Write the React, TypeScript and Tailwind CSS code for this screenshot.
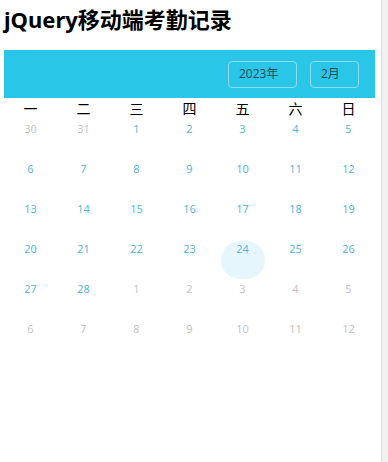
import React from "react";

const weeks = ["一", "二", "三", "四", "五", "六", "日"];

type Cell = { d: number; cur: boolean };

const cells: Cell[] = [
  { d: 30, cur: false },
  { d: 31, cur: false },
  ...Array.from({ length: 28 }, (_, i) => ({ d: i + 1, cur: true })),
  ...Array.from({ length: 12 }, (_, i) => ({ d: i + 1, cur: false })),
];

export default function App() {
  return (
    <div className="flex w-[388px] h-[462px] bg-white overflow-hidden" style={{ fontFamily: '"Open Sans", "Noto Sans CJK SC", sans-serif' }}>
      <div className="flex-1 pl-[4px] pr-[6px]">
        <h1 className="text-[22px] font-bold leading-[30px] mt-[4px] mb-[16px] text-black" style={{ fontFamily: '"Noto Sans", "Noto Sans CJK SC", sans-serif' }}>
          jQuery移动端考勤记录
        </h1>
        <div className="h-[48px] bg-[#29c6e8] flex items-center justify-end pr-[16px] gap-[13px]">
          <div className="w-[69px] h-[27px] border border-[#8fdcf0] rounded-[4px] text-[12px] text-[#2a4a55] flex items-center pl-[10px]">
            2023年
          </div>
          <div className="w-[49px] h-[27px] border border-[#8fdcf0] rounded-[4px] text-[12px] text-[#2a4a55] flex items-center pl-[10px]">
            2月
          </div>
        </div>
        <div className="grid grid-cols-7 h-[20px] items-center">
          {weeks.map((w) => (
            <div key={w} className="text-center text-[14px] leading-[20px] text-black" style={{ fontFamily: '"Noto Sans CJK SC", sans-serif' }}>
              {w}
            </div>
          ))}
        </div>
        <div className="grid grid-cols-7">
          {cells.map((c, i) => (
            <div key={i} className="relative h-[40px] flex justify-center">
              {c.cur && c.d === 24 && (
                <div className="absolute top-[3px] left-1/2 -translate-x-1/2 w-[44px] h-[38px] rounded-full bg-[#e6f6fd]" />
              )}
              <span className={`relative text-[11px] leading-[20px] pt-[1px] ${c.cur ? "text-[#4eb5d6]" : "text-[#c2c2c2]"}`}>
                {c.d}
              </span>
            </div>
          ))}
        </div>
      </div>
      <div className="w-[7px] h-[462px] bg-[#f1f1f1] border-l border-[#dcdcdc]" />
    </div>
  );
}
